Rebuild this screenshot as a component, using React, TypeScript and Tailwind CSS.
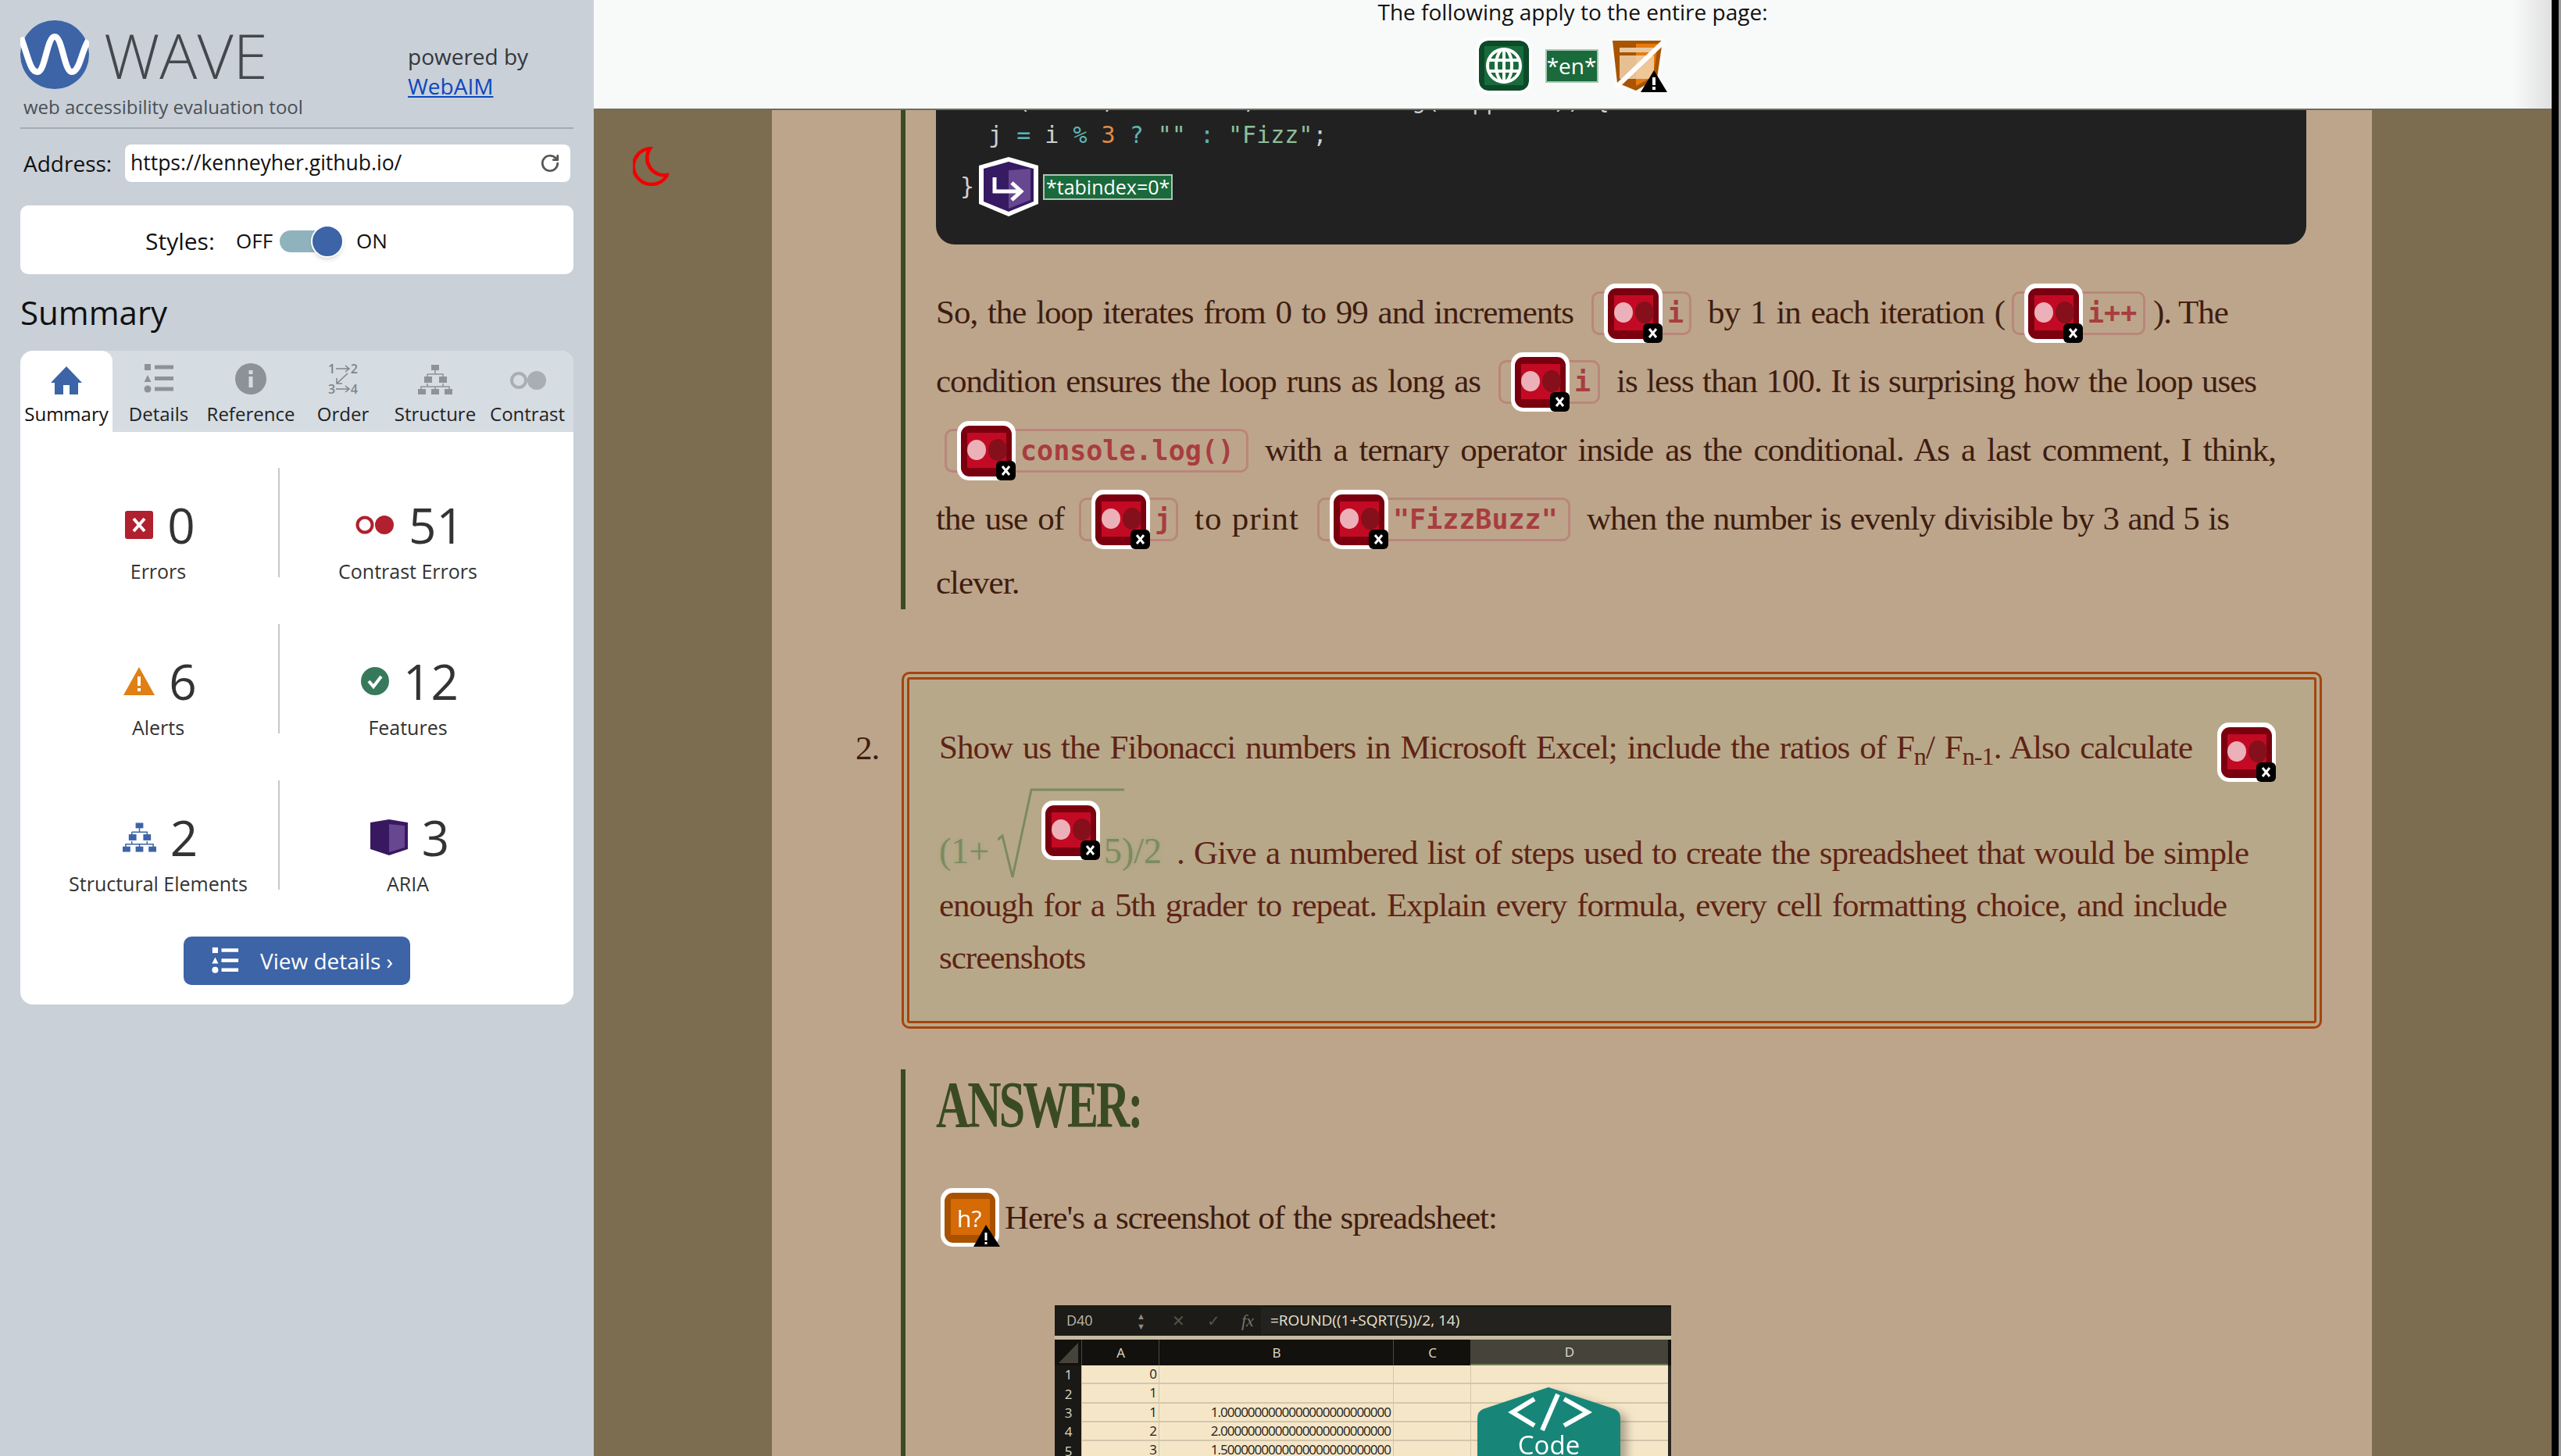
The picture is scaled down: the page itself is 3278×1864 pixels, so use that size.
import { RotateCw } from "lucide-react";
import type { ReactNode } from "react";

const body = "font-['Liberation_Serif',serif] text-[43px] leading-none tracking-[-1px]";
const mono = "font-['DejaVu_Sans_Mono',monospace]";

function ListIcon({ color, w = 38, h = 40 }: { color: string; w?: number; h?: number }) {
  return (
    <svg width={w} height={h} viewBox="0 0 38 40" fill={color}>
      <rect x="1" y="1" width="8" height="8" />
      <path d="M5 15 L9.500 24 H0.500 Z" />
      <circle cx="5" cy="33" r="4.500" />
      <rect x="14" y="2.500" width="24" height="5" />
      <rect x="14" y="17" width="24" height="5" />
      <rect x="14" y="30.500" width="24" height="5" />
    </svg>
  );
}

function TreeIcon({ color, w = 44, h = 38 }: { color: string; w?: number; h?: number }) {
  return (
    <svg width={w} height={h} viewBox="0 0 44 38">
      <g stroke={color} strokeWidth="1.500" fill="none">
        <path d="M22 6 V12 M12 12 H32 V18 M12 12 V18 M12 24 V28 M32 24 V28 M4 34 V28 H40 V34 M22 28 V34" />
      </g>
      <g fill={color}>
        <rect x="17" y="0" width="10" height="7" />
        <rect x="8" y="15" width="10" height="8" />
        <rect x="27" y="15" width="10" height="8" />
        <rect x="0" y="31" width="10" height="7" />
        <rect x="17" y="31" width="10" height="7" />
        <rect x="34" y="31" width="10" height="7" />
      </g>
    </svg>
  );
}

function OrderIcon() {
  return (
    <div className="relative h-[40px] w-[38px] text-[16px] font-semibold leading-[14px] text-[#7f8488]">
      <svg width="38" height="40" viewBox="0 0 38 40" className="absolute left-0 top-0" fill="none" stroke="#7f8488" strokeWidth="1.500">
        <path d="M10 7 H27 M22 3 L27 7 L22 11" />
        <path d="M10 33 H27 M22 29 L27 33 L22 37" />
        <path d="M25 13 L11 26 M11 19 V26 H18" />
      </svg>
      <span className="absolute left-0 top-0">1</span>
      <span className="absolute right-0 top-0">2</span>
      <span className="absolute bottom-0 left-0">3</span>
      <span className="absolute bottom-0 right-0">4</span>
    </div>
  );
}

function ContrastTab() {
  return (
    <svg width="50" height="36" viewBox="0 0 50 36">
      <circle cx="14" cy="18" r="9" fill="none" stroke="#a9aeb2" strokeWidth="4" />
      <circle cx="37" cy="18" r="12" fill="#a9aeb2" />
    </svg>
  );
}

function WaveContrast({ className = "" }: { className?: string }) {
  return (
    <svg width="75" height="76" viewBox="0 0 75 76" className={`shrink-0 ${className}`}>
      <rect width="75" height="76" rx="15" fill="#fff" />
      <rect x="5" y="6" width="65" height="65" rx="11" fill="#7a0010" />
      <rect x="13" y="15" width="50" height="45" fill="#c30a24" />
      <ellipse cx="25" cy="37" rx="12" ry="13" fill="#ecb1b8" />
      <ellipse cx="52" cy="37" rx="12" ry="14" fill="#860f1c" />
      <rect x="50" y="51" width="25" height="25" rx="6" fill="#000" />
      <path d="M58 58 L67 69 M67 58 L58 69" stroke="#fff" strokeWidth="3" />
    </svg>
  );
}

function HeadingAlert() {
  return (
    <div className="relative h-[75px] w-[76px] shrink-0">
      <svg width="76" height="75" viewBox="0 0 76 75" className="absolute left-0 top-0">
        <rect width="75" height="75" rx="15" fill="#fff" />
        <rect x="5" y="6" width="65" height="64" rx="11" fill="#a85200" />
        <rect x="13" y="14" width="50" height="46" fill="#d66a05" />
      </svg>
      <span className="absolute left-[21px] top-[19px] font-['Open_Sans',sans-serif] text-[30px] leading-[40px] tracking-normal text-white">h?</span>
      <svg width="76" height="75" viewBox="0 0 76 75" className="absolute left-0 top-0">
        <path d="M58 47 L76 75 H42 Z" fill="#000" />
        <rect x="56.500" y="57" width="3" height="10" fill="#fff" />
        <rect x="56.500" y="69" width="3" height="3" fill="#fff" />
      </svg>
    </div>
  );
}

function HtmlShield() {
  return (
    <svg width="76" height="76" viewBox="0 0 76 76" className="shrink-0">
      <path d="M2 3 H74 V12 L68 58 L36 74 L8 64 Z" fill="#fbfbfb" />
      <path d="M6 6 H70 L63 54 L36 70 L12 60 Z" fill="#a85400" />
      <path d="M36 10 H64 L58 52 L36 64 Z" fill="#e47b12" />
      <rect x="15" y="15" width="44" height="6" fill="#e8c8a0" />
      <rect x="15" y="25" width="44" height="30" fill="#f1d4ad" opacity="0.85" />
      <path d="M72 7 L10 66" stroke="#fff" strokeWidth="6" />
      <path d="M59 44 L76 72 H42 Z" fill="#000" />
      <rect x="57" y="53" width="4" height="10" fill="#fff" />
      <rect x="57" y="65" width="4" height="4" fill="#fff" />
    </svg>
  );
}

function AriaShield() {
  return (
    <svg width="76" height="76" viewBox="0 0 76 76" className="shrink-0">
      <path d="M38 0 L76 11 V60 L38 76 L0 60 V11 Z" fill="#fff" />
      <path d="M38 6 L70 15 V57 L38 70 L6 57 V15 Z" fill="#361a62" />
      <path d="M38 17 L66 15 V55 L38 66 Z" fill="#664790" />
      <path d="M20 26 V44 H50" fill="none" stroke="#fff" strokeWidth="5" />
      <path d="M42 33 L54 44 L42 55" fill="none" stroke="#fff" strokeWidth="5" />
    </svg>
  );
}

function Chip({ className, children }: { className: string; children: ReactNode }) {
  return (
    <span
      className={`flex h-[56px] shrink-0 items-center rounded-[10px] border-[3px] border-[#b9867a] pl-[13px] text-[35px] font-bold tracking-normal text-[#a83d3f] ${mono} ${className}`}
    >
      <WaveContrast className="-my-[12px] mr-[6px]" />
      {children}
    </span>
  );
}

function Seg({ className, children }: { className: string; children: ReactNode }) {
  return <span className={`block shrink-0 whitespace-nowrap [text-align-last:justify] ${className}`}>{children}</span>;
}

function Stat({ icon, value, label, divider }: { icon: ReactNode; value: string; label: string; divider?: boolean }) {
  return (
    <div className={`flex h-[140px] flex-col items-center pt-[43px] ${divider ? "border-r-2 border-[#c6c8ca] pl-[3px]" : ""}`}>
      <div className="ml-[5px] flex h-[60px] items-center gap-[18px]">
        {icon}
        <span className="text-[62px] leading-none text-[#333]">{value}</span>
      </div>
      <div className="mt-[14px] whitespace-nowrap text-[25px] leading-[30px] text-[#333]">{label}</div>
    </div>
  );
}

function Tab({ label, icon, active }: { label: string; icon: ReactNode; active?: boolean }) {
  return (
    <div className={`flex w-[118px] flex-col items-center ${active ? "rounded-t-[14px] bg-white text-[#111]" : "text-[#222]"}`}>
      <div className="flex h-[64px] items-end justify-center pb-[8px]">{icon}</div>
      <div className="whitespace-nowrap text-[24px] leading-[34px]">{label}</div>
    </div>
  );
}

function Sidebar() {
  return (
    <aside className="flex h-full w-[760px] shrink-0 flex-col bg-[#c9d0d8] px-[26px]">
      <div className="flex h-[165px] shrink-0 border-b-2 border-[#a5abb6] pt-[26px]">
        <div className="w-[496px]">
          <div className="flex h-[88px] items-center gap-[19px]">
            <svg width="88" height="88" viewBox="0 0 88 88" className="shrink-0">
              <circle cx="44" cy="44" r="44" fill="#3c64a6" />
              <path
                d="M1 22 C11 50 13 66 22 66 C32 66 34 21 44 21 C54 21 56 66 66 66 C76 66 78 40 87 26"
                fill="none"
                stroke="#fff"
                strokeWidth="8"
              />
            </svg>
            <span className="text-[80px] font-light leading-none text-[#43484e]">WAVE</span>
          </div>
          <div className="ml-[4px] mt-[8px] whitespace-nowrap text-[24px] leading-[30px] text-[#4a4f55]">
            web accessibility evaluation tool
          </div>
        </div>
        <div className="pt-[27px] text-[28px] leading-[38px] text-[#33373b]">
          <div>powered by</div>
          <div className="text-[#0d47c0] underline">WebAIM</div>
        </div>
      </div>

      <div className="mt-[20px] flex h-[48px] shrink-0 items-center pl-[4px]">
        <span className="w-[130px] text-[28px] text-[#111]">Address:</span>
        <div className="flex h-[48px] w-[570px] items-center justify-between rounded-[8px] bg-white pl-[7px] pr-[13px] text-[26.500px] text-[#111]">
          <span>https://kenneyher.github.io/</span>
          <RotateCw size={26} color="#555" strokeWidth={2.500} />
        </div>
      </div>

      <div className="mt-[30px] flex h-[88px] shrink-0 items-center rounded-[10px] bg-white pl-[160px] pt-[3px] text-[#111]">
        <span className="w-[116px] text-[30px]">Styles:</span>
        <span className="w-[56px] text-[26px]">OFF</span>
        <div className="relative h-[28px] w-[62px] rounded-full bg-[#8fb3bc]">
          <div className="absolute -top-[7px] right-[-20px] h-[42px] w-[42px] rounded-full border-2 border-white bg-[#3c64a6] shadow-md" />
        </div>
        <span className="ml-[36px] text-[26px]">ON</span>
      </div>

      <h2 className="mt-[20px] h-[78px] shrink-0 text-[42px] leading-[58px] text-[#111]">Summary</h2>

      <div className="flex shrink-0 flex-col overflow-hidden rounded-[16px] bg-white">
        <div className="flex h-[104px] bg-[#d5dce2]">
          <Tab
            active
            label="Summary"
            icon={
              <svg width="40" height="36" viewBox="0 0 40 36" fill="#3c64a6">
                <path d="M20 0 L40 21 H35 V36 H24 V24 H16 V36 H5 V21 H0 Z" />
              </svg>
            }
          />
          <Tab label="Details" icon={<ListIcon color="#8d9296" />} />
          <Tab
            label="Reference"
            icon={
              <svg width="40" height="40" viewBox="0 0 40 40">
                <circle cx="20" cy="20" r="20" fill="#8d9296" />
                <rect x="17.500" y="17" width="5" height="14" fill="#d5dce2" />
                <rect x="17.500" y="9" width="5" height="5" fill="#d5dce2" />
              </svg>
            }
          />
          <Tab label="Order" icon={<OrderIcon />} />
          <Tab label="Structure" icon={<TreeIcon color="#8d9296" />} />
          <Tab label="Contrast" icon={<ContrastTab />} />
        </div>

        <div className="flex flex-col px-[20px] pb-[25px] pt-[46px]">
          <div className="grid grid-cols-[312px_328px] gap-y-[60px]">
            <Stat
              divider
              value="0"
              label="Errors"
              icon={
                <svg width="36" height="36" viewBox="0 0 36 36">
                  <rect width="36" height="36" rx="3" fill="#b0202e" />
                  <path d="M11 10 L25 26 M25 10 L11 26" stroke="#fff" strokeWidth="4" />
                </svg>
              }
            />
            <Stat
              value="51"
              label="Contrast Errors"
              icon={
                <svg width="50" height="26" viewBox="0 0 50 26">
                  <circle cx="12" cy="13" r="9.500" fill="none" stroke="#b0202e" strokeWidth="4" />
                  <circle cx="37" cy="13" r="12" fill="#b0202e" />
                </svg>
              }
            />
            <Stat
              divider
              value="6"
              label="Alerts"
              icon={
                <svg width="40" height="36" viewBox="0 0 40 36">
                  <path d="M20 0 L40 36 H0 Z" fill="#e07f14" />
                  <rect x="18" y="12" width="4" height="12" fill="#fff" />
                  <rect x="18" y="27" width="4" height="4" fill="#fff" />
                </svg>
              }
            />
            <Stat
              value="12"
              label="Features"
              icon={
                <svg width="36" height="36" viewBox="0 0 36 36">
                  <circle cx="18" cy="18" r="18" fill="#37795b" />
                  <path d="M10 18 L16 25 L26 12" fill="none" stroke="#fff" strokeWidth="4" />
                </svg>
              }
            />
            <Stat divider value="2" label="Structural Elements" icon={<TreeIcon color="#3c64a6" w={43} h={38} />} />
            <Stat
              value="3"
              label="ARIA"
              icon={
                <svg width="48" height="46" viewBox="0 0 48 46">
                  <path d="M24 0 L48 4 V38 L24 46 L0 38 V4 Z" fill="#38195f" />
                  <path d="M24 6 L44 8 V36 L24 42 Z" fill="#664790" />
                </svg>
              }
            />
          </div>
          <div className="ml-[189px] mt-[60px] flex h-[62px] w-[290px] items-center self-start rounded-[10px] bg-[#3c64a6] pl-[35px] text-[28px] text-white">
            <ListIcon color="#fff" w={36} h={36} />
            <span className="ml-[27px]">View details ›</span>
          </div>
        </div>
      </div>
    </aside>
  );
}

function TopBar() {
  return (
    <header className="flex h-[141px] shrink-0 flex-col items-center border-b-2 border-[#6c6c60] bg-[linear-gradient(to_right,#f8f9f9_98%,#e0e0e0)]">
      <div className="h-[46px] text-[28px] leading-[30px] text-[#111]">The following apply to the entire page:</div>
      <div className="flex items-center">
        <div className="flex h-[64px] w-[64px] items-center justify-center rounded-[12px] bg-[#0c4a28] outline-4 outline-white">
          <div className="flex h-[50px] w-[50px] items-center justify-center bg-[#1a6b3c]">
            <svg width="46" height="46" viewBox="0 0 46 46" fill="none" stroke="#fff" strokeWidth="4">
              <circle cx="23" cy="23" r="21" />
              <ellipse cx="23" cy="23" rx="10" ry="21" />
              <path d="M23 2 V44 M3 16 H43 M3 30 H43" />
            </svg>
          </div>
        </div>
        <div className="ml-[21px] flex h-[43px] w-[68px] items-center justify-center border-2 border-[#a9c8b4] bg-[#1a6a3c] text-[28px] text-white">
          *en*
        </div>
        <div className="ml-[12px]">
          <HtmlShield />
        </div>
      </div>
    </header>
  );
}

function CodeBlock() {
  return (
    <div className={`-mt-[34px] h-[206px] w-[1754px] rounded-[24px] bg-[#212121] pl-[31px] text-[30px] leading-[44px] text-[#cfcfcf] ${mono}`}>
      <div className="whitespace-nowrap">for (i = 0; i &lt; 1000; console.log(a || i++)) {"{"}</div>
      <div className="whitespace-pre pl-[36px]">
        j <span className="text-[#5fb3b3]">=</span> i <span className="text-[#5fb3b3]">%</span>{" "}
        <span className="text-[#e08a45]">3</span> <span className="text-[#5fb3b3]">?</span>{" "}
        <span className="text-[#8cc09a]">""</span> <span className="text-[#5fb3b3]">:</span>{" "}
        <span className="text-[#8cc09a]">"Fizz"</span>;
      </div>
      <div className="flex h-[88px] items-center">
        <span className="w-[24px]">{"}"}</span>
        <AriaShield />
        <span className="ml-[6px] flex h-[33px] items-center border-2 border-[#a9c8b4] bg-[#1a6a3c] px-[2px] font-['Open_Sans',sans-serif] text-[25px] text-white">
          *tabindex=0*
        </span>
      </div>
    </div>
  );
}

function Paragraph() {
  return (
    <div className={`mt-[44px] flex flex-col text-[#3f1d0f] ${body}`}>
      <div className="flex h-[88px] items-center">
        <Seg className="mb-[4px] w-[816px]">So, the loop iterates from 0 to 99 and increments</Seg>
        <Chip className="ml-[23px] w-[128px]">i</Chip>
        <Seg className="mb-[4px] ml-[21px] w-[380px]">by 1 in each iteration (</Seg>
        <Chip className="ml-[9px] w-[171px]">i++</Chip>
        <Seg className="mb-[4px] ml-[10px] w-[95px]">). The</Seg>
      </div>
      <div className="flex h-[88px] items-center">
        <Seg className="mb-[4px] w-[697px]">condition ensures the loop runs as long as</Seg>
        <Chip className="ml-[23px] w-[130px]">i</Chip>
        <Seg className="mb-[4px] ml-[21px] w-[819px]">is less than 100. It is surprising how the loop uses</Seg>
      </div>
      <div className="flex h-[88px] items-center">
        <Chip className="ml-[11px] w-[389px]">console.log()</Chip>
        <Seg className="mb-[4px] ml-[21px] w-[1294px]">with a ternary operator inside as the conditional. As a last comment, I think,</Seg>
      </div>
      <div className="flex h-[88px] items-center">
        <Seg className="mb-[4px] w-[164px]">the use of</Seg>
        <Chip className="ml-[19px] w-[127px]">j</Chip>
        <Seg className="mb-[4px] ml-[21px] w-[134px] tracking-[1px]">to print</Seg>
        <Chip className="ml-[23px] w-[324px]">"FizzBuzz"</Chip>
        <Seg className="mb-[4px] ml-[21px] w-[822px]">when the number is evenly divisible by 3 and 5 is</Seg>
      </div>
      <div className="flex h-[72px] items-center">clever.</div>
    </div>
  );
}

function QuestionBox() {
  return (
    <div className={`relative ml-[166px] mt-[80px] h-[457px] w-[1818px] shrink-0 rounded-[10px] border-[10px] border-double border-[#a5440f] bg-[#b8a88a] pl-[38px] pt-[54px] text-[#5f2414] ${body}`}>
      <span className="absolute -left-[69px] top-[66px] text-[#3f1d0f]">2.</span>
      <div className="flex h-[78px] items-center">
        <Seg className="mb-[14px] w-[1604px]">
          Show us the Fibonacci numbers in Microsoft Excel; include the ratios of F<sub>n</sub>/ F<sub>n-1</sub>. Also calculate
        </Seg>
        <WaveContrast className="ml-[32px]" />
      </div>
      <div className="relative flex h-[123px] items-end">
        <svg width="165" height="123" viewBox="0 0 165 123" className="absolute left-[75px] top-0">
          <path d="M0 73 L6 68 L19 121 L43 9 H162" fill="none" stroke="#7c8a60" strokeWidth="3" />
        </svg>
        <span className="w-[131px] pb-[12px] text-[46px] tracking-normal text-[#7c8a60] [text-shadow:0_0_6px_#9aa679]">(1+</span>
        <WaveContrast className="mb-[24px]" />
        <span className="ml-[5px] w-[93px] pb-[12px] text-[46px] tracking-normal text-[#7c8a60] [text-shadow:0_0_6px_#9aa679]">5)/2</span>
        <Seg className="w-[1372px] pb-[12px]">. Give a numbered list of steps used to create the spreadsheet that would be simple</Seg>
      </div>
      <div className="flex h-[67px] items-center">
        <Seg className="w-[1648px]">enough for a 5th grader to repeat. Explain every formula, every cell formatting choice, and include</Seg>
      </div>
      <div className="flex h-[67px] items-center">screenshots</div>
    </div>
  );
}

const sheetRows = [
  ["1", "0", ""],
  ["2", "1", ""],
  ["3", "1", "1.0000000000000000000000000"],
  ["4", "2", "2.0000000000000000000000000"],
  ["5", "3", "1.5000000000000000000000000"],
];

function Spreadsheet() {
  return (
    <div className="relative ml-[152px] mt-[75px] w-[789px] font-['Open_Sans',sans-serif] text-[17px] tracking-[-1px] text-[#1c1b17]">
      <div className="flex h-[39px] items-center bg-[#1c1b17] pl-[15px] tracking-normal text-[#bdb9a8]">
        <span className="w-[90px] text-[18px]">D40</span>
        <span className="w-[45px] text-[11px] leading-[13px] text-[#8d8a7d]">
          ▲<br />▼
        </span>
        <span className="w-[45px] text-[20px] text-[#55534a]">✕</span>
        <span className="w-[44px] text-[20px] text-[#55534a]">✓</span>
        <span className="w-[25px] font-['Liberation_Serif',serif] text-[22px] italic text-[#77746a]">fx</span>
        <div className="flex h-[34px] flex-1 items-center bg-[#24221e] pl-[12px] text-[19px] text-[#e8e4d0]">
          =ROUND((1+SQRT(5))/2, 14)
        </div>
      </div>
      <div className="h-[5px] bg-[#c4bda2]" />
      <div className="grid grid-cols-[34px_99px_300px_99px_253px_4px] text-center">
        <div className="h-[33px] bg-[#12110e]">
          <svg width="34" height="33" viewBox="0 0 34 33">
            <path d="M30 4 V30 H5 Z" fill="#45433a" />
          </svg>
        </div>
        <div className="flex h-[33px] items-center justify-center border-l border-[#4a4a40] bg-[#12110e] text-[#e0dcc8]">A</div>
        <div className="flex h-[33px] items-center justify-center border-l border-[#4a4a40] bg-[#12110e] text-[#e0dcc8]">B</div>
        <div className="flex h-[33px] items-center justify-center border-l border-[#4a4a40] bg-[#12110e] text-[#e0dcc8]">C</div>
        <div className="flex h-[33px] items-center justify-center border-b-2 border-[#6f7f54] bg-[#45433a] text-[#e0dcc8]">D</div>
        <div className="h-[33px] bg-[#12110e]" />
        {sheetRows.map(([row, a, b]) => (
          <div key={row} className="contents">
            <div className="flex h-[24.300px] items-center justify-center bg-[#1a1915] text-[#dcd8c4]">{row}</div>
            <div className="h-[24.300px] border-b-2 border-l border-[#d2c7ab] bg-[#f5e6c8] pr-[3px] text-right leading-[22px]">{a}</div>
            <div className="h-[24.300px] border-b-2 border-l border-[#d2c7ab] bg-[#f5e6c8] pr-[3px] text-right leading-[22px]">{b}</div>
            <div className="h-[24.300px] border-b-2 border-l border-[#d2c7ab] bg-[#f5e6c8]" />
            <div className="h-[24.300px] border-b-2 border-l border-[#d2c7ab] bg-[#f5e6c8]" />
            <div className="h-[24.300px] bg-[#2a2923]" />
          </div>
        ))}
      </div>
      <div className="absolute left-[541px] top-[105px] h-[100px] w-[183px] drop-shadow-[8px_6px_6px_rgba(0,0,0,0.3)]">
        <svg width="183" height="100" viewBox="0 0 183 100" className="absolute left-0 top-0">
          <path d="M91 0 L176 28 Q183 31 183 40 V100 H0 V40 Q0 31 7 28 Z" fill="#178678" />
          <path d="M73 15 L45 32 L73 49 M111 15 L141 32 L111 49 M103 9 L83 55" fill="none" stroke="#fff" strokeWidth="6" />
        </svg>
        <div className="absolute inset-x-0 top-[52px] text-center text-[33px] leading-[44px] tracking-normal text-white">Code</div>
      </div>
    </div>
  );
}

export default function App() {
  return (
    <div className="flex h-[1864px] w-[3278px] overflow-hidden font-['Open_Sans',sans-serif]">
      <Sidebar />
      <main className="flex w-[2506px] shrink-0 flex-col">
        <TopBar />
        <div className="flex min-h-0 flex-1 overflow-hidden bg-[#7c6d50]">
          <div className="w-[228px] shrink-0 pl-[50px] pt-[47px]">
            <svg width="46" height="50" viewBox="0 0 46 50">
              <path
                d="M22 2 A 23 23 0 1 0 44 36 A 22 22 0 0 1 22 2 Z"
                fill="none"
                stroke="#f00000"
                strokeWidth="4.500"
              />
            </svg>
          </div>
          <div className="flex w-[2048px] shrink-0 flex-col bg-[#bda58c]">
            <section className="ml-[165px] h-[639px] shrink-0 border-l-[6px] border-[#3a4a25] pl-[39px]">
              <CodeBlock />
              <Paragraph />
            </section>
            <QuestionBox />
            <section className="ml-[165px] mt-[52px] flex-1 border-l-[6px] border-[#3a4a25] pl-[39px]">
              <div className="h-[111px] origin-left scale-y-[1.4] whitespace-nowrap pt-[14px] font-['Liberation_Serif',serif] text-[60px] font-bold leading-[70px] tracking-[-3px] text-[#3a4a25]">
                ANSWER:
              </div>
              <div className={`mt-[41px] flex h-[75px] items-center pl-[6px] text-[#3f1d0f] ${body}`}>
                <HeadingAlert />
                <Seg className="ml-[6px] w-[630px]">Here's a screenshot of the spreadsheet:</Seg>
              </div>
              <Spreadsheet />
            </section>
          </div>
        </div>
      </main>
      <div className="flex-1 border-l-[9px] border-black bg-[#9a9a9a]" />
    </div>
  );
}
